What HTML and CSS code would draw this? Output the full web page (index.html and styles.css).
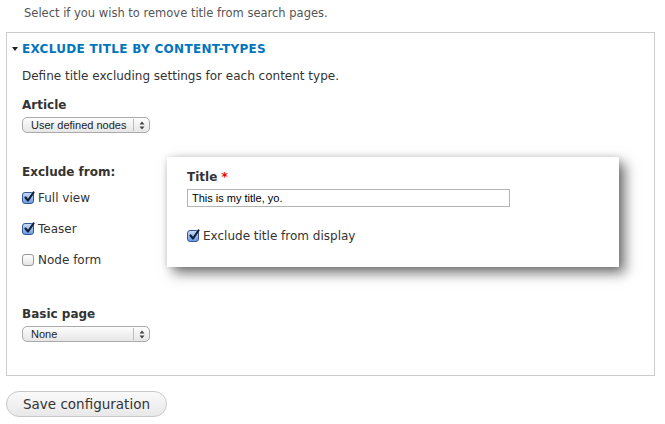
FILE: index.html
```html
<!DOCTYPE html>
<html>
<head>
<meta charset="utf-8">
<link rel="stylesheet" href="styles.css">
</head>
<body>
<div class="page">
  <div class="help">Select if you wish to remove title from search pages.</div>
  <div class="fieldset">
    <div class="legend"><span class="tri"></span>EXCLUDE TITLE BY CONTENT-TYPES</div>
    <div class="desc">Define title excluding settings for each content type.</div>
    <div class="label l-article">Article</div>
    <div class="select"><span class="sel-text">User defined nodes</span><span class="sel-arrow"><svg width="6" height="9" viewBox="0 0 6 9"><path d="M3 0.5 L5.5 3.5 H0.5 Z M3 8.5 L5.5 5.5 H0.5 Z" fill="#444"/></svg></span></div>
    <div class="label l-exclude">Exclude from:</div>
    <div class="checks">
      <div class="check"><span class="cb on"><svg width="12" height="12" viewBox="0 0 12 12"><path d="M2.5 6.5 L5 9.5 L10.5 1.5" fill="none" stroke="#10203a" stroke-width="2.2" stroke-linecap="round" stroke-linejoin="round"/></svg></span>Full view</div>
      <div class="check"><span class="cb on"><svg width="12" height="12" viewBox="0 0 12 12"><path d="M2.5 6.5 L5 9.5 L10.5 1.5" fill="none" stroke="#10203a" stroke-width="2.2" stroke-linecap="round" stroke-linejoin="round"/></svg></span>Teaser</div>
      <div class="check"><span class="cb"></span>Node form</div>
    </div>
    <div class="label l-basic">Basic page</div>
    <div class="select"><span class="sel-text">None</span><span class="sel-arrow"><svg width="6" height="9" viewBox="0 0 6 9"><path d="M3 0.5 L5.5 3.5 H0.5 Z M3 8.5 L5.5 5.5 H0.5 Z" fill="#444"/></svg></span></div>

    <div class="popup">
      <div class="label">Title <span class="req">*</span></div>
      <div class="input">This is my title, yo.</div>
      <div class="check pop-check"><span class="cb on"><svg width="12" height="12" viewBox="0 0 12 12"><path d="M2.5 6.5 L5 9.5 L10.5 1.5" fill="none" stroke="#10203a" stroke-width="2.2" stroke-linecap="round" stroke-linejoin="round"/></svg></span>Exclude title from display</div>
    </div>
  </div>
  <div class="button">Save configuration</div>
</div>
</body>
</html>
```
FILE: styles.css
```css
html, body {
  margin: 0;
  padding: 0;
  background: #fff;
}
.page {
  font-family: "DejaVu Sans", Verdana, sans-serif;
  font-size: 12px;
  color: #333;
  padding: 0 0 0 6px;
  width: 649px;
}
.help {
  color: #555;
  padding: 6px 0 0 18px;
  height: 26px;
  line-height: 14px;
  font-size: 11.5px;
}
.fieldset {
  position: relative;
  border: 1px solid #ccc;
  height: 344px;
  width: 649px;
  box-sizing: border-box;
  padding: 0 15px;
}
.legend {
  margin: 8px 0 0 -10px;
  color: #0074bd;
  font-weight: bold;
  font-size: 12px;
  line-height: 16px;
  display: flex;
  align-items: center;
  letter-spacing: 0.3px;
}
.tri {
  width: 0;
  height: 0;
  border-left: 3px solid transparent;
  border-right: 3px solid transparent;
  border-top: 4px solid #222;
  margin-right: 4px;
}
.desc {
  margin-top: 11px;
  line-height: 16px;
}
.label {
  font-weight: bold;
  line-height: 16px;
}
.l-article { margin-top: 13px; }
.l-exclude { margin-top: 31px; }
.l-basic { margin-top: 38px; }
.select {
  margin-top: 4px;
  width: 128px;
  height: 16px;
  box-sizing: border-box;
  border: 1px solid #aaa;
  border-radius: 5px;
  background: linear-gradient(#fdfdfd, #e6e6e6);
  display: flex;
  align-items: center;
  font-family: "Liberation Sans", Arial, sans-serif;
  font-size: 11px;
  color: #222;
}
.sel-text {
  flex: 1;
  padding-left: 8px;
}
.sel-arrow {
  width: 15px;
  height: 12px;
  border-left: 1px solid #bbb;
  display: flex;
  align-items: center;
  justify-content: center;
}
.checks {
  margin-top: 10px;
  display: flex;
  flex-direction: column;
  gap: 15px;
}
.check {
  display: flex;
  align-items: center;
  line-height: 16px;
}
.cb {
  width: 12px;
  height: 12px;
  box-sizing: border-box;
  border: 1px solid #999;
  border-radius: 3px;
  background: linear-gradient(#fff, #e4e4e4);
  margin-right: 4px;
  position: relative;
}
.cb.on {
  border-color: #34579a;
  background: linear-gradient(#c8daf5, #6f9be0);
}
.cb svg {
  position: absolute;
  left: 0;
  top: -2px;
}
.popup {
  position: absolute;
  left: 160px;
  top: 124px;
  width: 452px;
  height: 110px;
  box-sizing: border-box;
  background: #fff;
  padding: 12px 20px 0 20px;
  box-shadow: 6px 6px 12px rgba(0,0,0,0.55), 0 0 6px rgba(0,0,0,0.12);
}
.req { color: #e00; }
.input {
  margin-top: 4px;
  width: 323px;
  height: 18px;
  box-sizing: border-box;
  border: 1px solid #b4b4b4;
  font-family: "Liberation Sans", Arial, sans-serif;
  font-size: 11px;
  color: #000;
  line-height: 16px;
  padding-left: 4px;
}
.pop-check {
  margin-top: 21px;
}
.button {
  margin-top: 15px;
  width: 161px;
  height: 26px;
  box-sizing: border-box;
  border: 1px solid #c8c8c8;
  border-radius: 13px;
  background: linear-gradient(#fafafa, #e8e8e8);
  font-size: 13.5px;
  color: #333;
  display: flex;
  align-items: center;
  justify-content: center;
}
```
